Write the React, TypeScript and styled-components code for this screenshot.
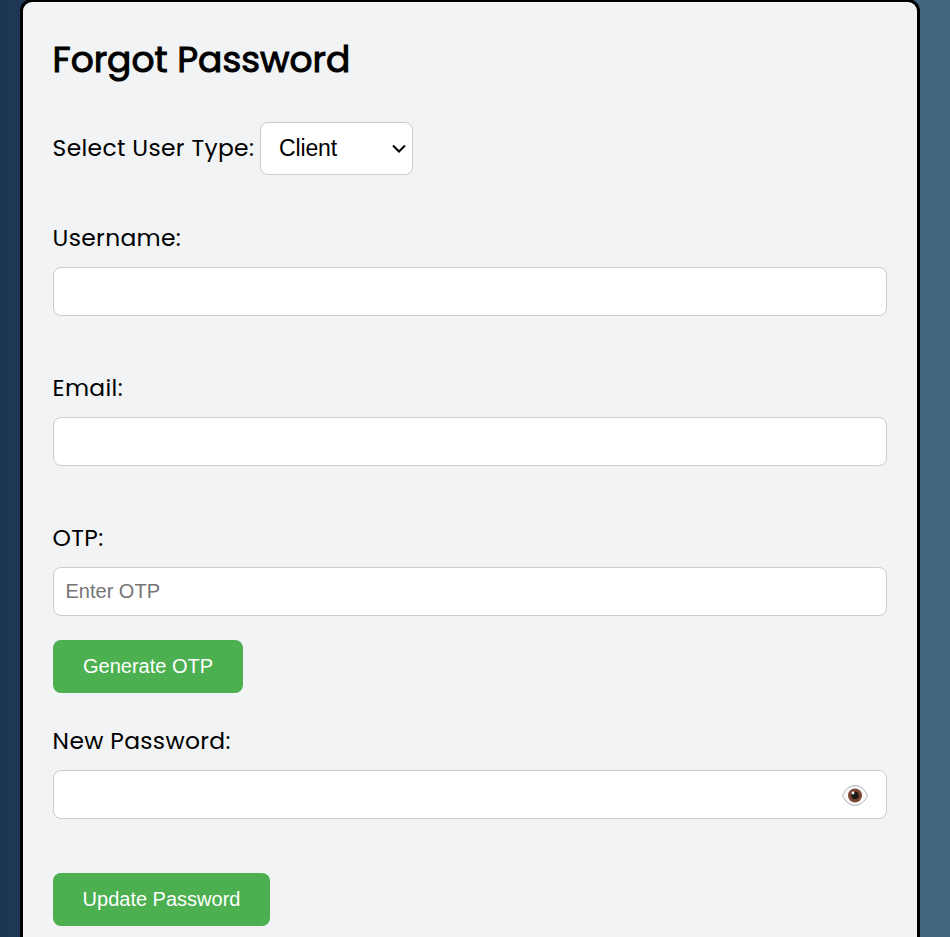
import React from "react";
import styled, { createGlobalStyle } from "styled-components";

const GlobalStyle = createGlobalStyle`
  * { box-sizing: border-box; }
  html, body { margin: 0; padding: 0; }
  body { height: 937px; overflow: hidden; }
`;

const Page = styled.main`
  height: 937px;
  overflow: hidden;
  padding: 0 30px 0 20px;
  background: linear-gradient(to right, #1c3653, #43677f);
  font-family: Poppins, Inter, "Liberation Sans", sans-serif;
  font-feature-settings: "cv11" 1;
  color: #000;
`;

const Card = styled.form`
  display: flex;
  flex-direction: column;
  align-items: stretch;
  width: 900px;
  height: 1000px;
  margin-top: -1px;
  padding: 30px;
  border: 3px solid #000;
  border-radius: 12px;
  background: #f1f3f5;
`;

const Title = styled.h2`
  margin: 0 0 0 -0.5px;
  height: 56px;
  line-height: 56px;
  font-size: 36px;
  font-weight: 400;
  -webkit-text-stroke: 1px #000;
  white-space: nowrap;
`;

const TypeRow = styled.div`
  display: flex;
  align-items: center;
  height: 53px;
  margin-top: 34px;
`;

const Label = styled.label`
  height: 36px;
  line-height: 36px;
  margin-left: -0.4px;
  font-size: 23.4px;
  font-weight: 400;
  letter-spacing: 0.33px;
  white-space: nowrap;
`;

const TypeLabel = styled(Label)`
  width: 207.4px;
  height: 38px;
`;

const SelectBox = styled.div`
  display: flex;
  align-items: center;
  justify-content: space-between;
  width: 153px;
  height: 53px;
  padding: 0 6px 0 18px;
  border: 1px solid #ccc;
  border-radius: 8px;
  background: #fff;
  font: 23px "Liberation Sans", Arial, sans-serif;
  letter-spacing: -0.15px;
`;

const Field = styled.div<{ $top: number }>`
  display: flex;
  flex-direction: column;
  gap: 11px;
  margin-top: ${(p) => p.$top}px;
`;

const InputFrame = styled.div`
  display: flex;
  align-items: center;
  height: 49px;
  padding: 0 18px 0 11.5px;
  border: 1px solid #ccc;
  border-radius: 8px;
  background: #fff;
`;

const Input = styled.input`
  flex: 1;
  min-width: 0;
  height: 45px;
  padding: 0;
  border: 0;
  outline: 0;
  background: transparent;
  font: 20px "Liberation Sans", Arial, sans-serif;
  &::placeholder { color: #757575; }
`;

const Button = styled.button<{ $width: number; $top: number }>`
  width: ${(p) => p.$width}px;
  height: 53px;
  margin: ${(p) => p.$top}px 0 0;
  padding: 0;
  border: 0;
  border-radius: 8px;
  background: #4caf50;
  color: #fff;
  font: 20px "Liberation Sans", Arial, sans-serif;
  white-space: nowrap;
`;

const Chevron = () => (
  <svg width="14" height="10" viewBox="0 0 14 10" fill="none">
    <path d="M1 1.5l6 6 6-6" stroke="#000" strokeWidth="2" />
  </svg>
);

const EyeIcon = styled.svg`
  margin-top: 2px;
`;

const Eye = () => (
  <EyeIcon width="26" height="21" viewBox="0 0 26 21">
    <path d="M.6 10.5C3 4.5 7.5.6 13 .6s10 3.9 12.4 9.9C23 16.5 18.5 20.4 13 20.4S3 16.5.6 10.5Z" fill="#fafafa" stroke="#b0b0b0" strokeWidth="1" />
    <path d="M1.6 10.5C4 15.5 8 19 12 19.8C7 19.3 3.5 16 1.6 10.5Z" fill="#ddd" />
    <circle cx="13" cy="10.5" r="7" fill="#7b4433" />
    <circle cx="13" cy="10.5" r="3.8" fill="#1b1a1b" />
    <circle cx="11" cy="8" r="1.4" fill="#fff" />
  </EyeIcon>
);

export default function App() {
  return (
    <>
      <GlobalStyle />
      <Page>
        <Card>
          <Title>Forgot Password</Title>
          <TypeRow>
            <TypeLabel>Select User Type:</TypeLabel>
            <SelectBox>
              <span>Client</span>
              <Chevron />
            </SelectBox>
          </TypeRow>
          <Field $top={45}>
            <Label>Username:</Label>
            <InputFrame><Input aria-label="Username" /></InputFrame>
          </Field>
          <Field $top={54}>
            <Label>Email:</Label>
            <InputFrame><Input aria-label="Email" /></InputFrame>
          </Field>
          <Field $top={54}>
            <Label>OTP:</Label>
            <InputFrame><Input placeholder="Enter OTP" /></InputFrame>
          </Field>
          <Button type="button" $width={190} $top={24}>Generate OTP</Button>
          <Field $top={30}>
            <Label>New Password:</Label>
            <InputFrame>
              <Input type="password" aria-label="New Password" />
              <Eye />
            </InputFrame>
          </Field>
          <Button type="button" $width={217} $top={54}>Update Password</Button>
        </Card>
      </Page>
    </>
  );
}
